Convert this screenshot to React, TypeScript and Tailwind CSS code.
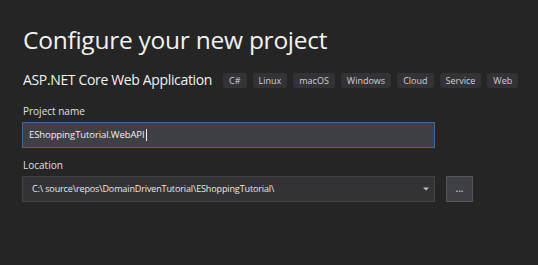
const tags = ["C#", "Linux", "macOS", "Windows", "Cloud", "Service", "Web"];

export default function App() {
  return (
    <div
      className="w-[538px] h-[265px] bg-[#252526] text-[#f1f1f1] overflow-hidden pl-[22px] pt-[24px]"
      style={{ fontFamily: '"Open Sans", "Noto Sans", sans-serif' }}
    >
      <h1 className="text-[24.5px] leading-[32px] font-normal tracking-[-0.25px] pl-px whitespace-nowrap">
        Configure your new project
      </h1>

      <div className="flex items-center mt-[15px] h-[18px] whitespace-nowrap">
        <span className="text-[14px] leading-[18px] pl-px tracking-[-0.35px]">ASP.NET Core Web Application</span>
        <div className="flex shrink-0 gap-[6px] ml-[11px]">
          {tags.map((t) => (
            <span
              key={t}
              className="h-[15px] px-[6px] rounded-[3px] bg-[#333337] text-[9px] leading-[15px] text-[#d0d0d0]"
            >
              {t}
            </span>
          ))}
        </div>
      </div>

      <div className="mt-[15px] text-[10px] leading-[14px] text-[#e0e0e0] pl-px">Project name</div>
      <div className="mt-[4px] w-[413px] h-[26px] border border-[#3b6a9a] bg-[#3f3f46] flex items-center pl-[6px]">
        <span className="text-[9.5px] text-[#f1f1f1] tracking-[-0.1px]">EShoppingTutorial.WebAPI</span>
        <span className="w-px h-[12px] bg-[#f1f1f1] ml-px" />
      </div>

      <div className="mt-[10px] text-[10px] leading-[14px] text-[#e0e0e0] pl-px">Location</div>
      <div className="mt-[4px] flex gap-[11px]">
        <div className="w-[413px] h-[26px] border border-[#434346] bg-[#333337] flex items-center pl-[9px] pr-[5px]">
          <span className="flex-1 text-[9px] text-[#e8e8e8] tracking-[-0.12px]">
            C:\ source\repos\DomainDrivenTutorial\EShoppingTutorial\
          </span>
          <svg width="6" height="4" viewBox="0 0 6 4">
            <path d="M0 0.5 L6 0.5 L3 3.5 Z" fill="#c0c0c0" />
          </svg>
        </div>
        <div className="w-[27px] h-[26px] border border-[#555558] bg-[#3f3f46] flex items-center justify-center text-[10px] text-[#e0e0e0] leading-none pb-[2px]">
          ...
        </div>
      </div>
    </div>
  );
}
